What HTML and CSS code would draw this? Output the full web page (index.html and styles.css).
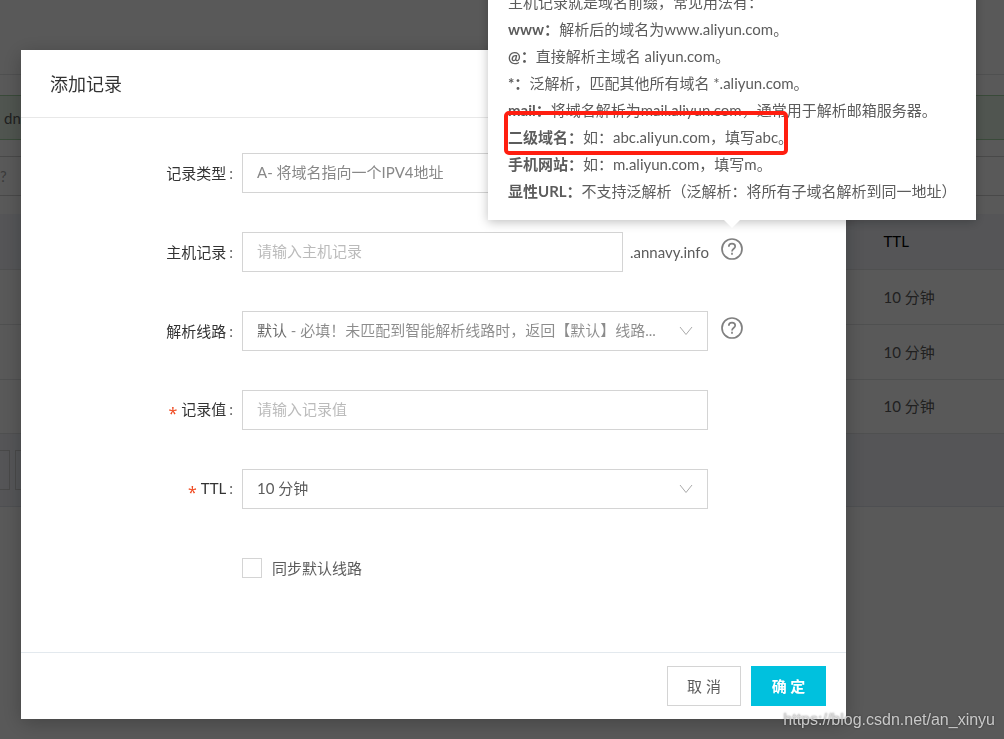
FILE: index.html
```html
<!DOCTYPE html>
<html lang="zh-CN">
<head>
<meta charset="utf-8">
<meta name="viewport" content="width=device-width, initial-scale=1">
<title>添加记录</title>
<link rel="stylesheet" href="styles.css">
</head>
<body>
<main class="page" aria-hidden="true">
  <div class="page-head"></div>
  <div class="notice">dns</div>
  <div class="filter">?</div>
  <table class="records">
    <thead><tr><th>TTL</th></tr></thead>
    <tbody>
      <tr><td>10 分钟</td></tr>
      <tr><td>10 分钟</td></tr>
      <tr><td>10 分钟</td></tr>
    </tbody>
  </table>
  <div class="bulk"><span class="bulk-btn"></span><span class="bulk-btn"></span></div>
</main>

<div class="overlay">
  <section class="dialog" role="dialog" aria-labelledby="dialog-title">
    <header class="dialog-head"><h1 class="dialog-title" id="dialog-title">添加记录</h1></header>
    <form class="form">
      <div class="row">
        <label class="label" for="type">记录类型</label>
        <div class="field select-wrap">
          <select class="control muted" id="type"><option>A- 将域名指向一个IPV4地址</option></select>
        </div>
      </div>
      <div class="row">
        <label class="label" for="host">主机记录</label>
        <div class="field host">
          <input class="control" id="host" type="text" placeholder="请输入主机记录">
          <span class="suffix">.annavy.info</span>
        </div>
        <div class="help-wrap">
          <button class="help" type="button" aria-label="主机记录帮助">
            <svg class="help-icon" viewBox="0 0 22 22"><circle cx="11" cy="11" r="10"/><path d="M7.8 8.8C7.8 6.8 9.2 5.7 11 5.7s3.2 1.1 3.2 2.8c0 2.2-3.2 2.4-3.2 5"/><path d="M11 14.8v1.9"/></svg>
          </button>
          <div class="tooltip" role="tooltip">
            <ul class="tips">
              <li>主机记录就是域名前缀，常见用法有：</li>
              <li><b>www：</b>解析后的域名为www.aliyun.com。</li>
              <li><b>@：</b>直接解析主域名 aliyun.com。</li>
              <li><b>*：</b>泛解析，匹配其他所有域名 *.aliyun.com。</li>
              <li><b>mail：</b>将域名解析为mail.aliyun.com，通常用于解析邮箱服务器。</li>
              <li class="marked"><b>二级域名：</b>如：abc.aliyun.com，填写abc。</li>
              <li><b>手机网站：</b>如：m.aliyun.com，填写m。</li>
              <li><b>显性URL：</b>不支持泛解析（泛解析：将所有子域名解析到同一地址）</li>
            </ul>
          </div>
        </div>
      </div>
      <div class="row">
        <label class="label" for="line">解析线路</label>
        <div class="field select-wrap">
          <select class="control two-tone" id="line"><option>默认 - 必填！未匹配到智能解析线路时，返回【默认】线路...</option></select>
          <svg class="chevron" viewBox="0 0 14 10"><path d="M1 1l6 7.5 6-7.5"/></svg>
        </div>
        <div class="help-wrap">
          <button class="help" type="button" aria-label="解析线路帮助">
            <svg class="help-icon" viewBox="0 0 22 22"><circle cx="11" cy="11" r="10"/><path d="M7.8 8.8C7.8 6.8 9.2 5.7 11 5.7s3.2 1.1 3.2 2.8c0 2.2-3.2 2.4-3.2 5"/><path d="M11 14.8v1.9"/></svg>
          </button>
        </div>
      </div>
      <div class="row">
        <label class="label required" for="value">记录值</label>
        <div class="field"><input class="control" id="value" type="text" placeholder="请输入记录值" required></div>
      </div>
      <div class="row">
        <label class="label required" for="ttl">TTL</label>
        <div class="field select-wrap">
          <select class="control" id="ttl"><option>10 分钟</option></select>
          <svg class="chevron" viewBox="0 0 14 10"><path d="M1 1l6 7.5 6-7.5"/></svg>
        </div>
      </div>
      <div class="row check-row">
        <input class="check" id="sync" type="checkbox"><label class="check-label" for="sync">同步默认线路</label>
      </div>
    </form>
    <footer class="dialog-foot">
      <button class="btn" type="button">取 消</button>
      <button class="btn primary" type="button">确 定</button>
    </footer>
  </section>
</div>
<div class="watermark">https://blog.csdn.net/an_xinyu</div>
</body>
</html>
```
FILE: styles.css
```css
*, *::before, *::after { box-sizing: border-box; }

body {
  margin: 0;
  min-height: 100vh;
  overflow: hidden;
  background: #fff;
  color: #5c5c5c;
  font: 15px/20px Lato, "Noto Sans CJK SC", sans-serif;
}

input, select, button { font: inherit; color: inherit; }

/* Page behind the dialog */
.page-head { height: 75px; border-bottom: 1px solid #e3e4e6; }
.notice {
  height: 45px;
  margin-top: 20px;
  padding: 12px 4px;
  border: solid #a4d3a4;
  border-width: 1px 0;
  background: #e4f3e4;
}
.filter {
  height: 40px;
  margin: 16px 0 18px;
  padding: 9px 0;
  border: solid #d0d0d0;
  border-width: 1px 0;
  color: #aaa;
}
.records { width: 100%; border-collapse: collapse; }
.records th, .records td {
  height: 55px;
  padding: 0 0 0 88%;
  border-bottom: 1px solid #e3e4e6;
  text-align: left;
  white-space: nowrap;
}
.records th { background: #f3f4fa; color: #000; font-weight: 400; }
.records tr:last-child td { height: 54px; }
.bulk {
  display: flex;
  gap: 5px;
  height: 73px;
  padding: 16px 0;
  border-bottom: 1px solid #dfe3ea;
  background: #f3f4fa;
}
.bulk-btn { width: 60px; height: 40px; border: 1px solid #d0d0d0; }
.bulk-btn:first-child { width: 10px; border-left: 0; }

/* Dialog */
.overlay {
  position: fixed;
  inset: 0;
  padding: 50px 158px 20px 21px;
  background: rgba(0, 0, 0, .65);
}
.dialog { background: #fff; box-shadow: 0 4px 20px rgba(0, 0, 0, .25); }
.dialog-head { padding: 22px 29px 21px; border-bottom: 1px solid #e8e8e8; }
.dialog-title { margin: 0; color: #333; font-size: 18px; line-height: 24px; font-weight: 400; }

.form { display: flex; flex-direction: column; gap: 39px; padding: 35px 102px 64px 0; }
.row { display: flex; height: 40px; align-items: center; }
.label { width: 221px; padding-right: 9px; color: #333; text-align: right; }
.label::after { content: ":"; margin-left: 3px; color: #666; }
.required::before {
  content: "*";
  margin-right: 4px;
  color: #f04b22;
  font: 16px/16px "Noto Sans", sans-serif;
  vertical-align: -4px;
}
.field { flex: 1; min-width: 0; max-width: 466px; }
.control {
  display: block;
  width: 100%;
  height: 40px;
  padding: 0 14px 2px;
  border: 1px solid #d4d4d4;
  border-radius: 0;
  background: #fff;
  appearance: none;
}
.control::placeholder { color: #bbb; }
.muted { color: #888; }
.two-tone {
  color: transparent;
  background: linear-gradient(to right, #666 44px, #8c8c8c 44px);
  background-clip: text;
}
.select-wrap { position: relative; }
.chevron {
  position: absolute;
  top: 15px;
  right: 15px;
  width: 14px;
  height: 10px;
  fill: none;
  stroke: #aaa;
  pointer-events: none;
}
.host { display: flex; align-items: center; gap: 7px; }
.host .control { flex: 1; min-width: 0; }
.suffix { width: 78px; }

.help-wrap { position: relative; margin-left: 13px; padding-bottom: 6px; }
.help { display: block; padding: 0; border: 0; background: none; }
.help-icon { display: block; width: 22px; height: 22px; fill: none; stroke: #808080; stroke-width: 1.7; }

.tooltip {
  position: absolute;
  bottom: 46px;
  left: 50%;
  width: 488px;
  padding: 15px 20px;
  background: #fff;
  box-shadow: 0 2px 10px rgba(0, 0, 0, .25);
  transform: translateX(-50%);
}
.tooltip::after {
  content: "";
  position: absolute;
  top: 100%;
  left: 50%;
  margin-left: -8px;
  border: 8px solid transparent;
  border-top-color: #fff;
  border-bottom: 0;
}
.tips { margin: 0; padding: 0; list-style: none; line-height: 27px; white-space: nowrap; }
.marked { position: relative; }
.marked::after {
  content: "";
  position: absolute;
  top: -13px;
  left: -4px;
  width: 284px;
  height: 44px;
  border: 4px solid #ff1e10;
  border-radius: 5px;
}

.check-row { padding-left: 221px; gap: 10px; }
.check { width: 20px; height: 20px; margin: 0; border: 1px solid #d4d4d4; appearance: none; }

.dialog-foot {
  display: flex;
  justify-content: flex-end;
  gap: 10px;
  padding: 13px 20px;
  border-top: 1px solid #e3e9ee;
}
.btn { min-width: 74px; height: 40px; padding: 0 18px; border: 1px solid #d4d4d4; background: #fff; }
.primary { min-width: 75px; border-color: #00c1de; background: #00c1de; color: #fff; font-weight: 700; }

.watermark {
  position: fixed;
  right: 9px;
  bottom: 9px;
  color: rgba(225, 225, 225, .85);
  font: 16px/20px "Liberation Sans", sans-serif;
  text-shadow: 0 0 2px rgba(0, 0, 0, .5);
}
```
